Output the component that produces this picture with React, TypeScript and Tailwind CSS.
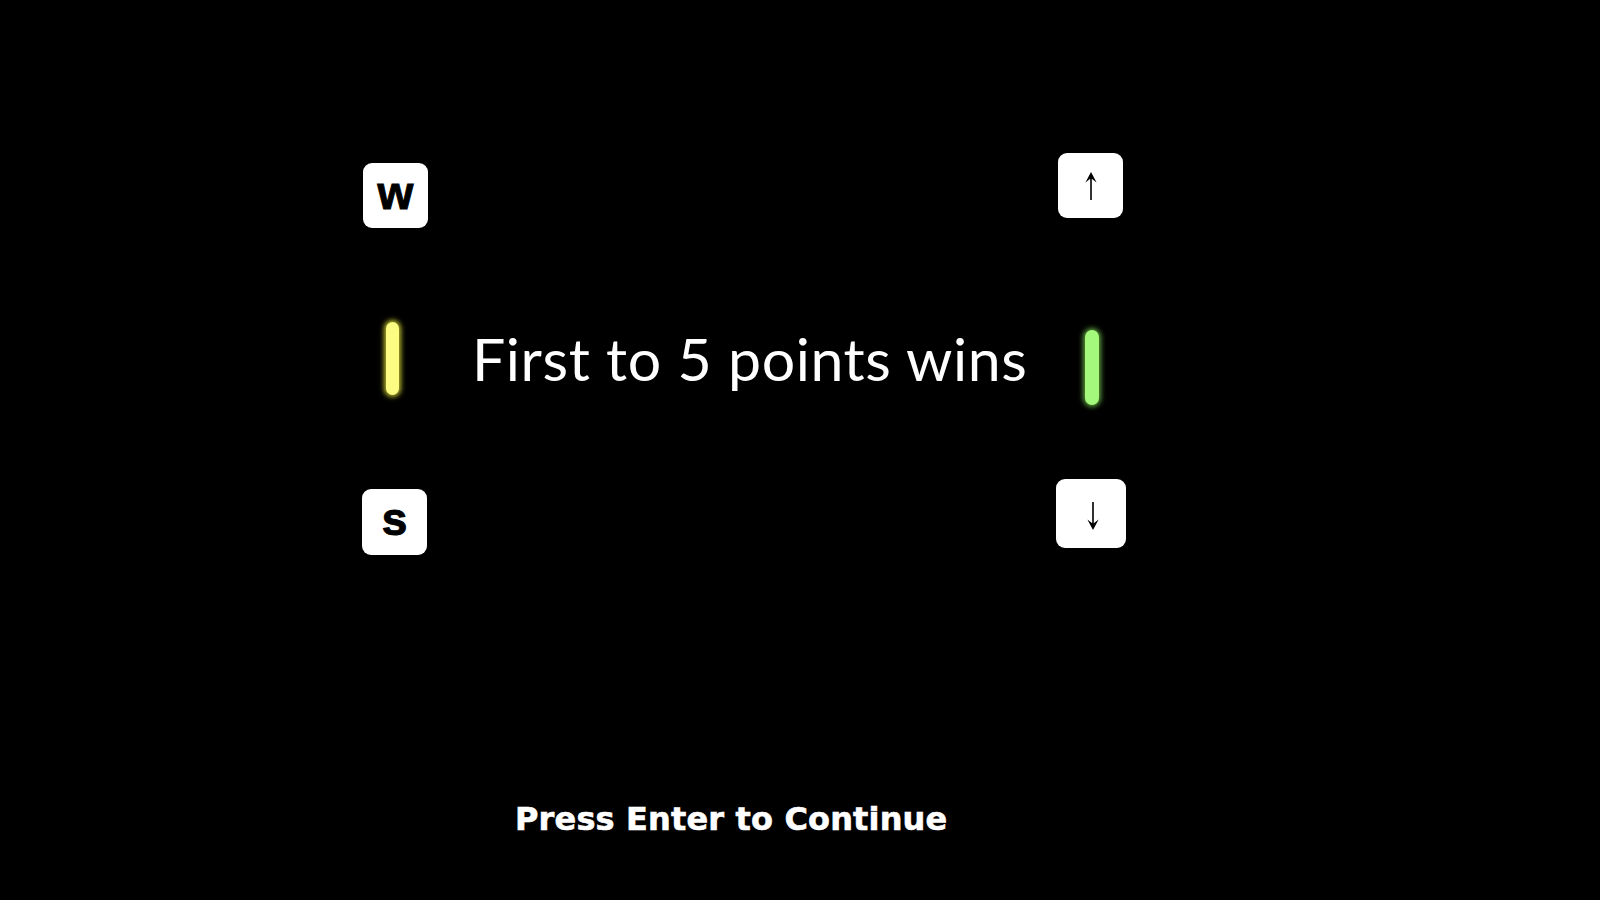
import React from "react";

function ArrowIcon({ down = false }: { down?: boolean }) {
  return (
    <svg width="12" height="28" viewBox="0 0 12 28" className={down ? "rotate-180" : ""}>
      <path d="M6 0 L11.6 10.5 L6.8 6.8 L6.8 28 L5.2 28 L5.2 6.8 L0.4 10.5 Z" fill="#000" />
    </svg>
  );
}

export default function App() {
  return (
    <div className="w-full h-[900px] bg-black flex flex-col overflow-hidden">
      <div className="flex items-start pt-[153px]">
        {/* Left controls */}
        <div className="ml-[362px] w-[66px] flex flex-col">
          <div className="mt-[10px] ml-[1px] w-[65px] h-[65px] bg-white rounded-[9px] flex items-center justify-center">
            <span className="font-['Liberation_Sans',Arial,sans-serif] font-bold text-[46px] leading-none text-black pb-[6px] [-webkit-text-stroke:1px_black]">
              w
            </span>
          </div>
          <div className="mt-[94px] ml-[24px] w-[13px] h-[73px] rounded-full bg-[#fcfc82] shadow-[0_0_5px_2px_#b8b830]" />
          <div className="mt-[94px] w-[65px] h-[66px] bg-white rounded-[9px] flex items-center justify-center">
            <span className="font-['Liberation_Sans',Arial,sans-serif] font-bold text-[46px] leading-none text-black pb-[6px] [-webkit-text-stroke:1px_black]">
              s
            </span>
          </div>
        </div>

        {/* Center text */}
        <div className="w-[628px] pl-[44px] pt-[176px]">
          <div className="font-['Lato','Open_Sans',sans-serif] text-[59px] tracking-[0.6px] leading-none text-white whitespace-nowrap">
            First to 5 points wins
          </div>
        </div>

        {/* Right controls */}
        <div className="w-[70px] flex flex-col">
          <div className="ml-[2px] w-[65px] h-[65px] bg-white rounded-[9px] flex items-center justify-center">
            <ArrowIcon />
          </div>
          <div className="mt-[112px] ml-[29px] w-[14px] h-[75px] rounded-full bg-[#a4f97c] shadow-[0_0_5px_2px_#5a9a3a]" />
          <div className="mt-[74px] w-[70px] h-[69px] bg-white rounded-[9px] flex items-center justify-center pl-[4px] pt-[4px]">
            <ArrowIcon down />
          </div>
        </div>
      </div>

      <div className="mt-[248px] ml-[515px] font-['DejaVu_Sans',Verdana,sans-serif] font-bold text-[32px] tracking-[0.15px] leading-none text-white whitespace-nowrap [-webkit-text-stroke:0.6px_white]">
        Press Enter to Continue
      </div>
    </div>
  );
}
